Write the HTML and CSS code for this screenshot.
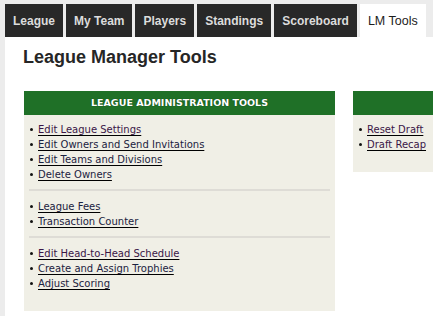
FILE: index.html
```html
<!DOCTYPE html>
<html lang="en">
<head>
  <meta charset="UTF-8">
  <meta name="viewport" content="width=device-width, initial-scale=1.0">
  <title>LM Tools</title>
  <link rel="stylesheet" href="styles.css">
</head>
<body>
  <nav class="tabs">
    <a class="tab" href="#">League</a>
    <a class="tab" href="#">My Team</a>
    <a class="tab" href="#">Players</a>
    <a class="tab" href="#">Standings</a>
    <a class="tab" href="#">Scoreboard</a>
    <a class="tab active" href="#">LM Tools</a>
  </nav>
  <main class="content">
    <h1 class="title">League Manager Tools</h1>
    <div class="panels">
      <section class="panel">
        <h2 class="panel-head">LEAGUE ADMINISTRATION TOOLS</h2>
        <div class="panel-body">
          <ul class="group">
            <li><a class="visited" href="#">Edit League Settings</a></li>
            <li><a href="#">Edit Owners and Send Invitations</a></li>
            <li><a href="#">Edit Teams and Divisions</a></li>
            <li><a href="#">Delete Owners</a></li>
          </ul>
          <hr class="sep">
          <ul class="group">
            <li><a href="#">League Fees</a></li>
            <li><a href="#">Transaction Counter</a></li>
          </ul>
          <hr class="sep">
          <ul class="group">
            <li><a class="visited" href="#">Edit Head-to-Head Schedule</a></li>
            <li><a href="#">Create and Assign Trophies</a></li>
            <li><a href="#">Adjust Scoring</a></li>
          </ul>
        </div>
      </section>
      <section class="panel">
        <h2 class="panel-head"></h2>
        <div class="panel-body">
          <ul class="group">
            <li><a class="visited" href="#">Reset Draft</a></li>
            <li><a class="visited" href="#">Draft Recap</a></li>
          </ul>
        </div>
      </section>
    </div>
  </main>
</body>
</html>
```

FILE: styles.css
```css
html, body {
  height: 100%;
}
body {
  margin: 0;
  padding: 4px 0 0 5px;
  box-sizing: border-box;
  display: flex;
  flex-direction: column;
  background: #ececec;
  font-family: Arial, "Liberation Sans", sans-serif;
  overflow: hidden;
}
.tabs {
  display: flex;
  gap: 3px;
  height: 33px;
  flex: none;
}
.tab {
  display: flex;
  align-items: center;
  padding: 0 8px;
  background: #282828;
  color: #dcdcdc;
  font-size: 12px;
  font-weight: bold;
  text-decoration: none;
  white-space: nowrap;
}
.tab.active {
  background: #fff;
  color: #1c1c1c;
  font-weight: normal;
  font-size: 12.5px;
}
.content {
  flex: 1;
  min-height: 0;
  background: #fff;
  padding: 9px 0 0 19px;
  overflow: hidden;
}
.title {
  margin: 0 0 23px -1px;
  font-size: 18px;
  line-height: 22px;
  color: #262626;
}
.panels {
  display: flex;
  gap: 18px;
  align-items: flex-start;
}
.panel {
  flex: 0 0 311px;
  background: #f0efe6;
}
.panel-head {
  margin: 0;
  height: 24px;
  line-height: 24px;
  background: #1f7027;
  color: #fff;
  font-family: "DejaVu Sans", Verdana, sans-serif;
  font-size: 9.5px;
  font-weight: bold;
  text-align: center;
  text-shadow: 0 0 1px #0a3a10;
}
.panel-body {
  padding-bottom: 13px;
}
.group {
  list-style: none;
  margin: 0;
  padding: 7px 0 7px 14px;
  font-family: "DejaVu Sans", Verdana, sans-serif;
  font-size: 10px;
  line-height: 15px;
}
.group li {
  position: relative;
}
.group li::before {
  content: "";
  position: absolute;
  left: -8px;
  top: 6px;
  width: 3px;
  height: 3px;
  border-radius: 50%;
  background: #111;
}
.group a {
  color: #1b2240;
  text-decoration: underline;
  text-decoration-color: #000;
  text-underline-offset: 2px;
}
.group a.visited {
  color: #3a1646;
}
.sep {
  margin: 0 5px 1px;
  border: 0;
  border-top: 2px solid #dedcd6;
}
```
